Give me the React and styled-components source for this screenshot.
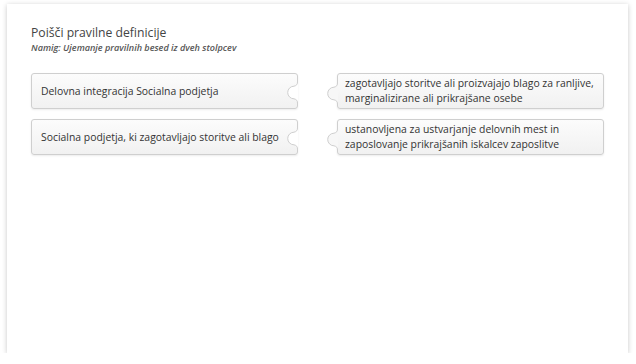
import React from "react";
import styled, { createGlobalStyle } from "styled-components";

const GlobalStyle = createGlobalStyle`
  body {
    margin: 0;
    background: #ffffff;
    font-family: "Open Sans", "Liberation Sans", sans-serif;
  }
`;

// pairs shown in the matching exercise
const pairs = [
  {
    term: "Delovna integracija Socialna podjetja",
    definition:
      "zagotavljajo storitve ali proizvajajo blago za ranljive, marginalizirane ali prikrajšane osebe",
  },
  {
    term: "Socialna podjetja, ki zagotavljajo storitve ali blago",
    definition:
      "ustanovljena za ustvarjanje delovnih mest in zaposlovanje prikrajšanih iskalcev zaposlitve",
  },
];

const PIECE_EDGE =
  "M13.5 0 C13.5 2.5 12.5 3.5 10 4.2 A6.3 6.3 0 1 0 10 16.8 C12.5 17.5 13.5 18.5 13.5 21";

// hole cut into the right edge of a term piece
const Socket = () => (
  <SocketSvg width="14" height="21" viewBox="0 0 14 21">
    <path d={PIECE_EDGE + " L14 21 L14 0 Z"} fill="#ffffff" />
    <path d={PIECE_EDGE} fill="none" stroke="#cfcfcf" strokeWidth="1" />
  </SocketSvg>
);

// tab sticking out of the left edge of a definition piece
const Knob = () => (
  <KnobSvg width="14" height="21" viewBox="0 0 14 21">
    <path d={PIECE_EDGE + " L14 21 L14 0 Z"} fill="#f7f7f7" />
    <path d={PIECE_EDGE} fill="none" stroke="#cfcfcf" strokeWidth="1" />
  </KnobSvg>
);

export default function App() {
  return (
    <>
      <GlobalStyle />
      <Panel>
        <Title>Poišči pravilne definicije</Title>
        <Hint>Namig: Ujemanje pravilnih besed iz dveh stolpcev</Hint>
        <Board>
          {pairs.map((p) => (
            <Row key={p.term}>
              <Piece $side="left">
                {p.term}
                <Socket />
              </Piece>
              <Piece $side="right">
                <Knob />
                {p.definition}
              </Piece>
            </Row>
          ))}
        </Board>
      </Panel>
    </>
  );
}

const Panel = styled.div`
  box-sizing: border-box;
  width: 621px;
  height: 349px;
  margin: 4px 0 0 7px;
  padding: 20px 24px;
  background: #ffffff;
  box-shadow: 0 1px 5px rgba(0, 0, 0, 0.22);
`;

const Title = styled.h1`
  margin: 0;
  font-size: 12.2px;
  line-height: 18px;
  font-weight: 500;
  color: #444444;
`;

const Hint = styled.div`
  font-size: 9.1px;
  line-height: 12px;
  font-style: italic;
  font-weight: 600;
  color: #555555;
`;

const Board = styled.div`
  display: flex;
  flex-direction: column;
  gap: 10px;
  margin-top: 19px;
`;

const Row = styled.div`
  display: flex;
  gap: 39px;
`;

const Piece = styled.div`
  position: relative;
  box-sizing: border-box;
  width: 267px;
  height: 36px;
  display: flex;
  align-items: center;
  padding: ${(p) => (p.$side === "left" ? "0 16px 0 9px" : "0 6px 0 7px")};
  background: linear-gradient(#fcfcfc, #f1f1f1);
  border: 1px solid #cfcfcf;
  border-radius: 3px;
  box-shadow: 0 1px 2px rgba(0, 0, 0, 0.08);
  font-size: 10.4px;
  line-height: 15px;
  color: #333333;
`;

const SocketSvg = styled.svg`
  position: absolute;
  right: -1px;
  top: 8px;
  display: block;
`;

const KnobSvg = styled.svg`
  position: absolute;
  left: -14px;
  top: 9px;
  display: block;
`;
